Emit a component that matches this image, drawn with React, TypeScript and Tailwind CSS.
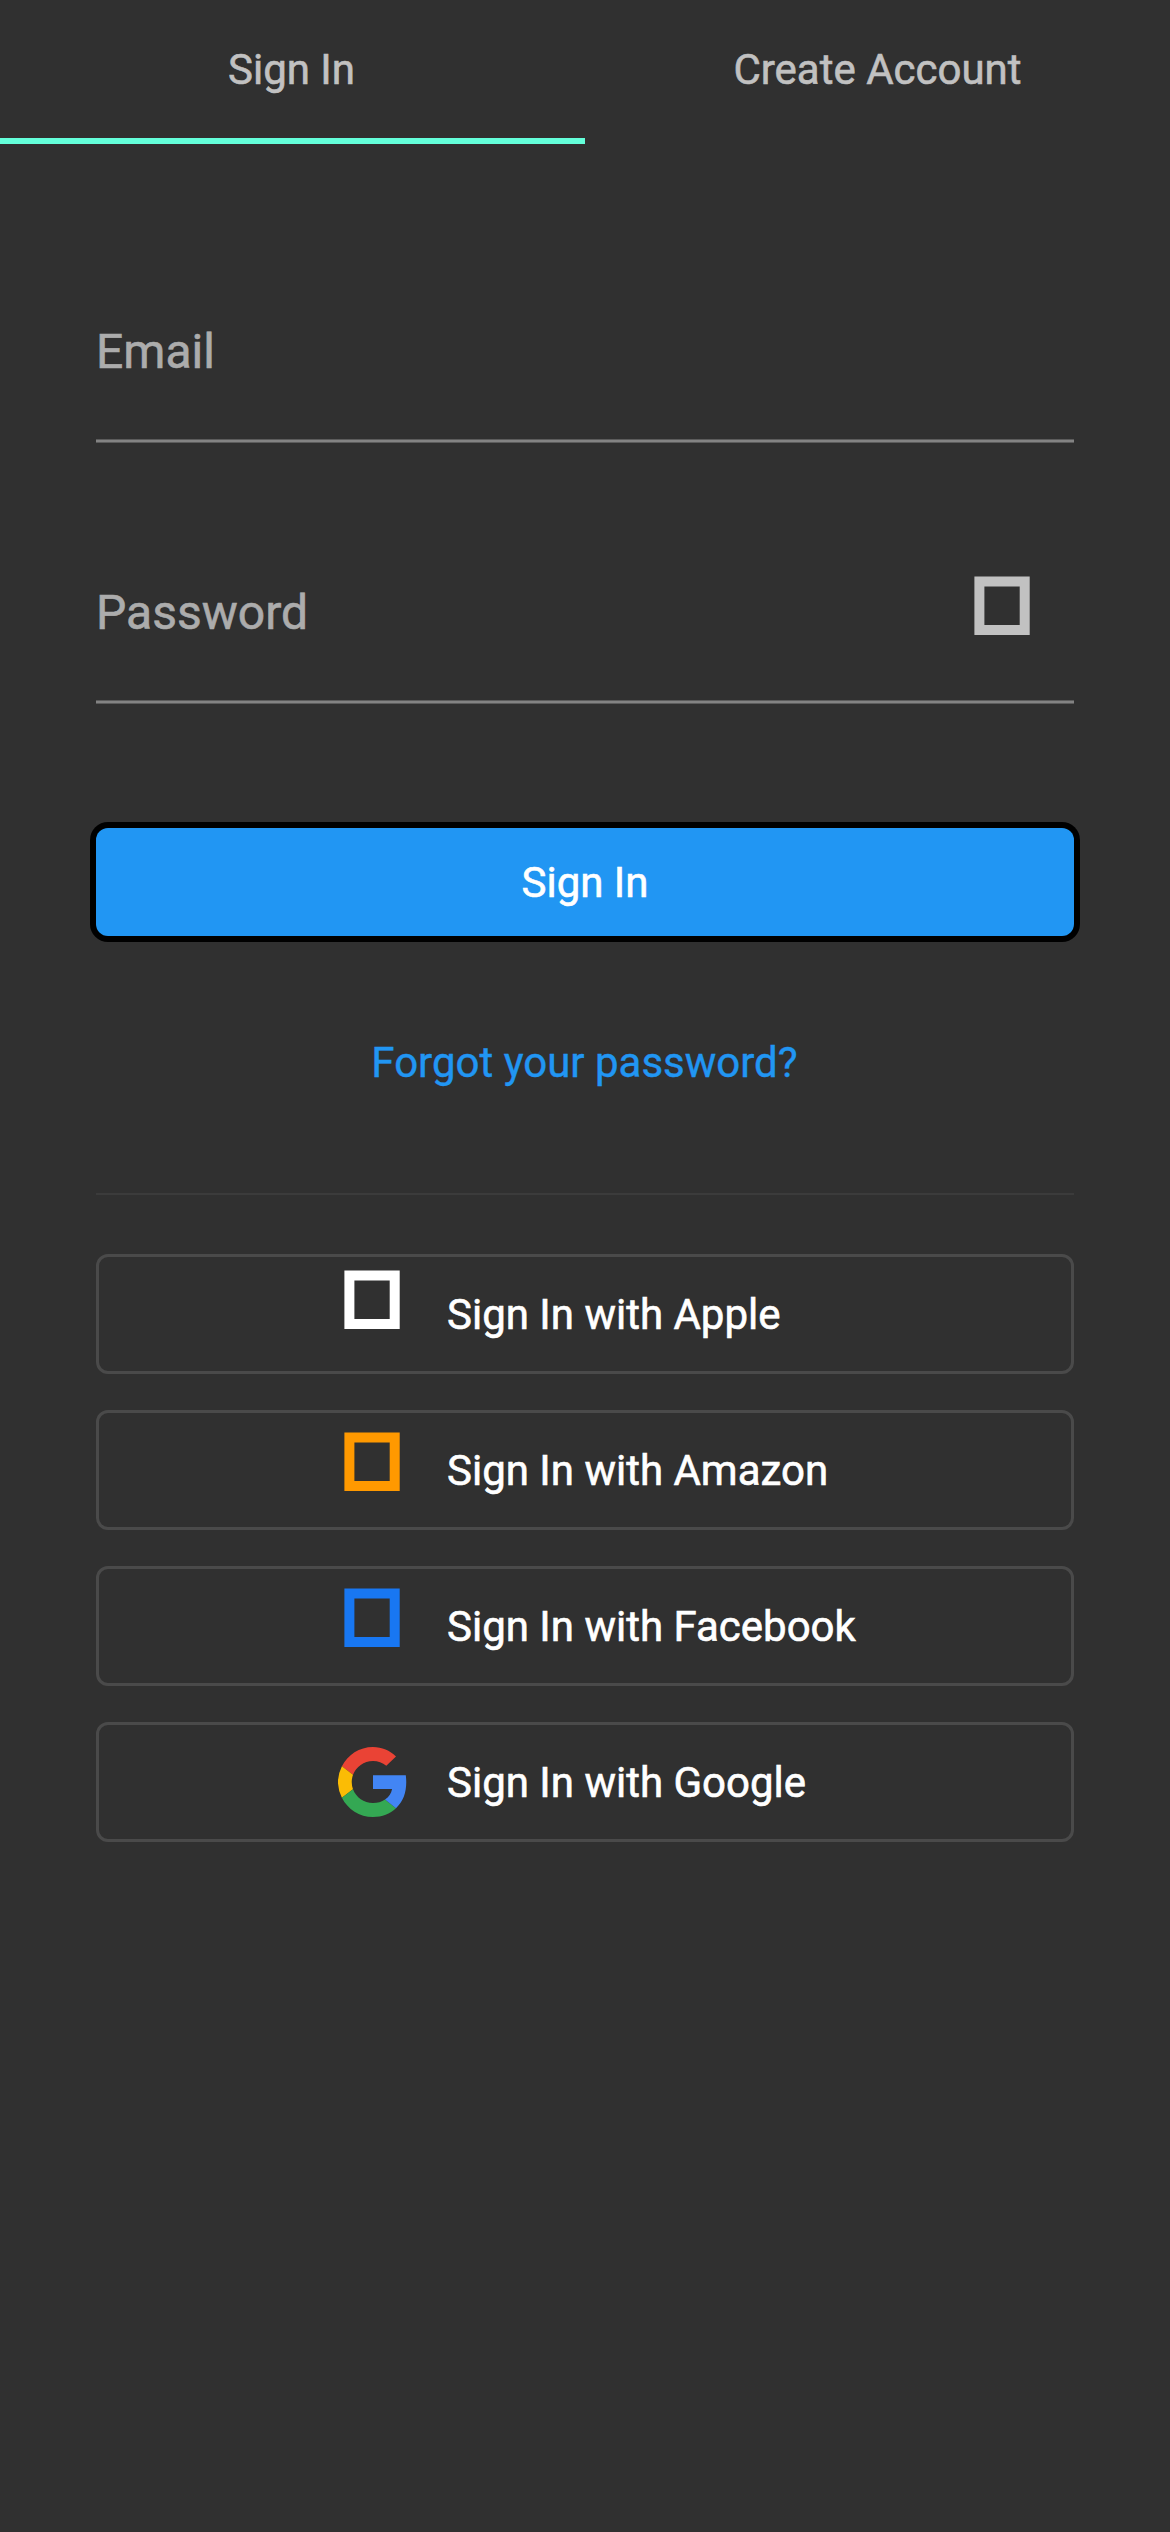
import React from 'react';

type Provider = { name: string; icon?: string };

const providers: Provider[] = [
  { name: 'Apple', icon: 'mt-[12px] text-white' },
  { name: 'Amazon', icon: 'mt-[18px] text-[#ff9900]' },
  { name: 'Facebook', icon: 'mt-[18px] text-[#1877f2]' },
  { name: 'Google' },
];

function SquareIcon({ className }: { className: string }) {
  return (
    <svg className={`h-[59px] w-[56px] shrink-0 ${className}`} viewBox="0 0 56 59" fill="currentColor">
      <path fillRule="evenodd" d="M.4 .5H55.7V59H.4zM10.4 10.4V49H45.7V10.4z" />
    </svg>
  );
}

function GoogleIcon() {
  return (
    <svg className="mt-[21px] ml-[-6px] h-[70px] w-[70px] shrink-0" viewBox="0 0 70 70">
      <path fill="#EA4335" d="M58 9.5 48.3 18.8A20.8 20.8 0 0 0 35 14C25.800 14 18.100 19.800 15 27.800L3.900 19.300C9.700 7.800 21.400 0 35 0 44 0 51.800 3.400 58 9.500z" />
      <path fill="#FBBC05" d="M3.900 19.300 15 27.800A21.500 21.500 0 0 0 15 42.200L3.900 50.700A35 35 0 0 1 3.900 19.300z" />
      <path fill="#34A853" d="M3.900 50.700 15 42.200C18.100 50.200 25.800 56 35 56 39.600 56 43.700 54.900 47 52.500L58 61.300C52 66.900 44.200 70 35 70 21.400 70 9.700 62.200 3.900 50.700z" />
      <path fill="#4285F4" d="M35 28.300H67.800C69.400 41.500 66.800 53.300 58 61.300L47 52.500C50.900 49.900 53.200 46.500 54.100 42H35z" />
    </svg>
  );
}

function Underline() {
  return <div className="h-[4px] border-y border-[#5c5c5c] bg-[#838383]" />;
}

export default function App() {
  return (
    <div
      className="h-[2532px] w-full bg-[#303030] text-[42px] leading-[49px] text-white [-webkit-text-stroke:0.6px]"
      style={{ fontFamily: 'Roboto, sans-serif' }}
    >
      <nav className="grid h-[144px] grid-cols-2 text-center text-[#c1c1c1]">
        <div className="border-b-[6px] border-[#64ffda] pt-[45px] pr-[2px]">Sign In</div>
        <div className="pt-[45px]">Create Account</div>
      </nav>
      <main className="px-24">
        <div className="mt-[155px] h-[140px] pt-[24px] text-[48px] leading-[57px] text-[#acacac]">Email</div>
        <Underline />
        <div className="mt-[117px] flex h-[140px] justify-between pr-[44px] text-[48px] leading-[57px] text-[#acacac]">
          <span className="pt-[24px]">Password</span>
          <SquareIcon className="mt-[16px] text-[#c1c1c1]" />
        </div>
        <Underline />
        <button className="mt-[124px] block h-[108px] w-full rounded-[12px] bg-[#2196f3] pt-px shadow-[0_0_0_6px_#000]">Sign In</button>
        <div className="mt-[102px] pr-px text-center text-[#2196f3] [-webkit-text-stroke:0.4px]">Forgot your password?</div>
        <hr className="mt-[106px] border-t-2 border-[#3b3b3b]" />
        <div className="mt-[59px] flex flex-col gap-9">
          {providers.map((p) => (
            <button key={p.name} className="flex h-[120px] rounded-[12px] border-[3px] border-[#4a4a4a] pt-px pl-[245px] text-left">
              <span className="flex h-full w-[103px] items-start">
                {p.icon ? <SquareIcon className={p.icon} /> : <GoogleIcon />}
              </span>
              <span className="self-center">Sign In with {p.name}</span>
            </button>
          ))}
        </div>
      </main>
    </div>
  );
}
